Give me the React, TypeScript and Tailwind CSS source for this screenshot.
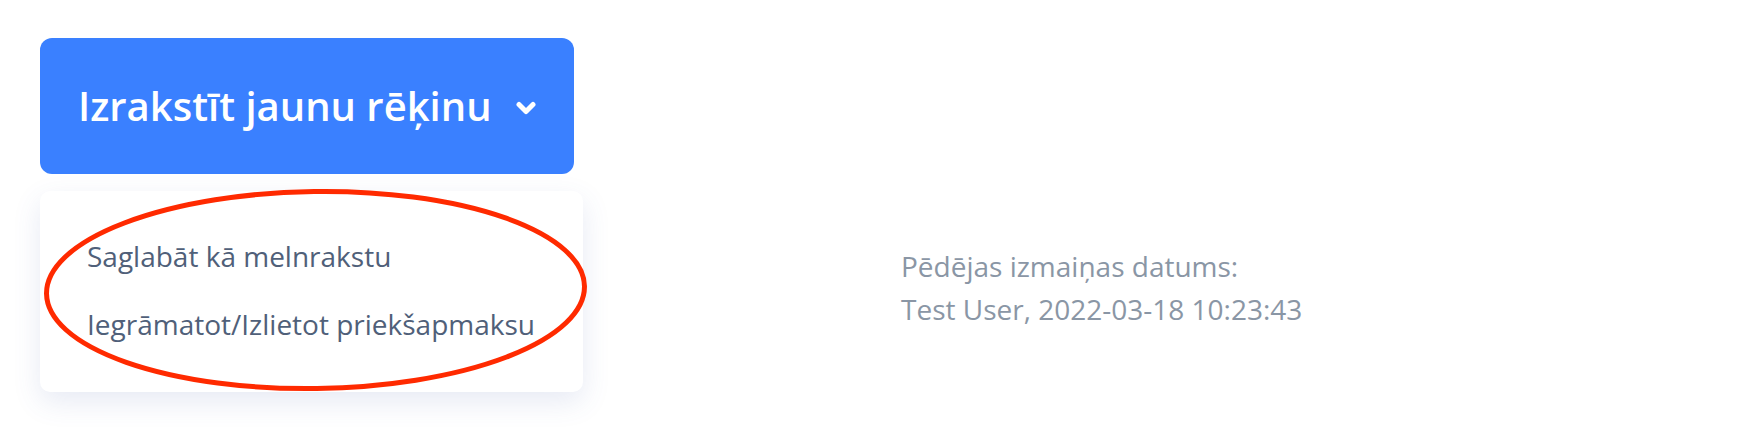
import React from "react";

export default function App() {
  return (
    <div
      className="w-[1744px] h-[428px] bg-white relative overflow-hidden"
      style={{ fontFamily: '"Open Sans", "Noto Sans", sans-serif' }}
    >
      <div className="flex pl-[40px] pt-[38px]">
        <div className="flex flex-col w-[543px]">
          <button className="flex items-center w-[534px] h-[136px] rounded-[12px] bg-[#3a80ff] pl-[38px] text-white">
            <span className="text-[40px] font-semibold leading-none">
              Izrakstīt jaunu rēķinu
            </span>
            <svg
              className="ml-[24px] mt-[3px]"
              width="20"
              height="14"
              viewBox="0 0 20 14"
              fill="none"
            >
              <polyline
                points="3,3.5 10,10.5 17,3.5"
                stroke="white"
                strokeWidth="5"
                strokeLinecap="round"
                strokeLinejoin="round"
              />
            </svg>
          </button>
          <div className="mt-[17px] w-[543px] h-[201px] rounded-[10px] bg-white shadow-[0_10px_28px_rgba(70,90,170,0.13)] pt-[44px] pl-[47px] flex flex-col gap-[26px]">
            <div className="text-[28px] leading-[42px] text-[#506079]">
              Saglabāt kā melnrakstu
            </div>
            <div className="text-[28px] leading-[42px] text-[#506079]">
              Iegrāmatot/Izlietot priekšapmaksu
            </div>
          </div>
        </div>
        <div className="ml-[318px] mt-[207px] text-[28px] leading-[43px] text-[#8a96a5]">
          <div>Pēdējas izmaiņas datums:</div>
          <div>Test User, 2022-03-18 10:23:43</div>
        </div>
      </div>
      <svg
        className="absolute left-0 top-0 pointer-events-none"
        width="1744"
        height="428"
        viewBox="0 0 1744 428"
      >
        <ellipse
          cx="315.5"
          cy="290"
          rx="269"
          ry="98.5"
          fill="none"
          stroke="#ff2a00"
          strokeWidth="5"
          transform="rotate(-0.8 315.5 290)"
        />
      </svg>
    </div>
  );
}
